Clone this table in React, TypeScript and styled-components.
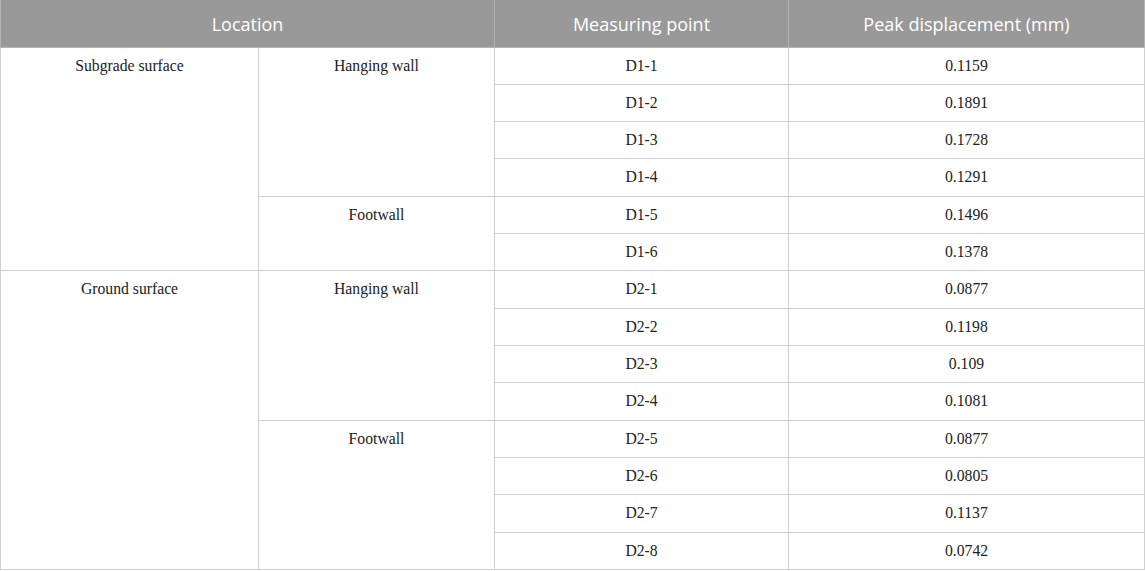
import React from "react";
import styled, { createGlobalStyle } from "styled-components";

const Global = createGlobalStyle`
  html, body { margin: 0; padding: 0; background: #ffffff; }
`;

const Table = styled.table`
  width: 1144px;
  border-collapse: collapse;
  table-layout: fixed;
  font-family: "Liberation Serif", "Times New Roman", serif;
  font-size: 15.7px;
  color: #222;
`;

const HeadCell = styled.th`
  height: 47px;
  padding: 2px 0 0;
  background: #999999;
  color: #ffffff;
  font-family: "Open Sans", "Noto Sans", sans-serif;
  font-weight: 400;
  font-size: 18px;
  text-align: center;
  vertical-align: middle;
  border: 1px solid #b4b4b4;
  border-top: none;
  box-sizing: border-box;
`;

const Row = styled.tr`
  height: 37.33px;
`;

const Cell = styled.td`
  padding: 9px 6px 0;
  text-align: center;
  vertical-align: top;
  border: 1px solid #cfcfcf;
  line-height: 18px;
`;

type Group = { location: string; subs: { name: string; points: [string, string][] }[] };

const data: Group[] = [
  {
    location: "Subgrade surface",
    subs: [
      {
        name: "Hanging wall",
        points: [
          ["D1-1", "0.1159"],
          ["D1-2", "0.1891"],
          ["D1-3", "0.1728"],
          ["D1-4", "0.1291"],
        ],
      },
      {
        name: "Footwall",
        points: [
          ["D1-5", "0.1496"],
          ["D1-6", "0.1378"],
        ],
      },
    ],
  },
  {
    location: "Ground surface",
    subs: [
      {
        name: "Hanging wall",
        points: [
          ["D2-1", "0.0877"],
          ["D2-2", "0.1198"],
          ["D2-3", "0.109"],
          ["D2-4", "0.1081"],
        ],
      },
      {
        name: "Footwall",
        points: [
          ["D2-5", "0.0877"],
          ["D2-6", "0.0805"],
          ["D2-7", "0.1137"],
          ["D2-8", "0.0742"],
        ],
      },
    ],
  },
];

export default function App() {
  const rows: React.ReactNode[] = [];
  data.forEach((g, gi) => {
    const total = g.subs.reduce((a, s) => a + s.points.length, 0);
    g.subs.forEach((s, si) => {
      s.points.forEach((p, pi) => {
        rows.push(
          <Row key={`${gi}-${si}-${pi}`}>
            {si === 0 && pi === 0 && <Cell rowSpan={total}>{g.location}</Cell>}
            {pi === 0 && <Cell rowSpan={s.points.length}>{s.name}</Cell>}
            <Cell>{p[0]}</Cell>
            <Cell>{p[1]}</Cell>
          </Row>
        );
      });
    });
  });

  return (
    <>
      <Global />
      <Table>
        <colgroup>
          <col style={{ width: 258 }} />
          <col style={{ width: 236 }} />
          <col style={{ width: 294 }} />
          <col style={{ width: 356 }} />
        </colgroup>
        <thead>
          <tr>
            <HeadCell colSpan={2}>Location</HeadCell>
            <HeadCell>Measuring point</HeadCell>
            <HeadCell>Peak displacement (mm)</HeadCell>
          </tr>
        </thead>
        <tbody>{rows}</tbody>
      </Table>
    </>
  );
}
